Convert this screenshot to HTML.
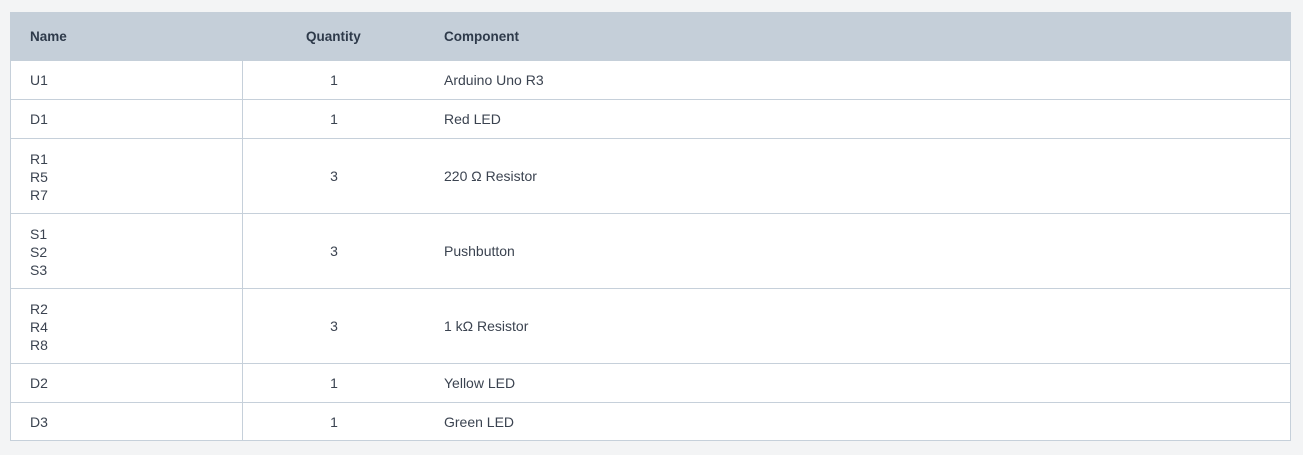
<!DOCTYPE html>
<html><head><meta charset="utf-8"><style>
html,body{margin:0;padding:0;background:#f3f4f5;width:1303px;height:455px;overflow:hidden;font-family:"Liberation Sans",Arial,sans-serif;}
.t{position:absolute;left:10px;top:12px;width:1279px;height:428px;border:1px solid #c6d0da;border-top:none;background:#fff;}
.h{position:absolute;left:10px;top:12px;width:1281px;height:49px;background:#c5cfd9;}
.x{position:absolute;font-size:14px;color:#3b4350;white-space:nowrap;}
.b{font-weight:bold;color:#2e3a4a;font-size:13.5px;}
.hl{position:absolute;left:10px;width:1281px;height:1px;background:#c6d0da;}
.vl{position:absolute;left:242px;top:61px;width:1px;height:380px;background:#c6d0da;}
.q{width:40px;text-align:center;left:314px;}
</style></head><body>
<div class="t"></div>
<div class="h"></div>
<div class="vl"></div>
<div class="hl" style="top:99px"></div>
<div class="hl" style="top:138px"></div>
<div class="hl" style="top:213px"></div>
<div class="hl" style="top:288px"></div>
<div class="hl" style="top:363px"></div>
<div class="hl" style="top:402px"></div>

<div class="x b" style="left:30px;top:29px">Name</div>
<div class="x b" style="left:306px;top:29px">Quantity</div>
<div class="x b" style="left:444px;top:29px">Component</div>

<div class="x" style="left:30px;top:72px">U1</div>
<div class="x q" style="top:72px">1</div>
<div class="x" style="left:444px;top:72px">Arduino Uno R3</div>

<div class="x" style="left:30px;top:111px">D1</div>
<div class="x q" style="top:111px">1</div>
<div class="x" style="left:444px;top:111px">Red LED</div>

<div class="x" style="left:30px;top:150px;line-height:18px">R1<br>R5<br>R7</div>
<div class="x q" style="top:168px">3</div>
<div class="x" style="left:444px;top:168px">220 Ω Resistor</div>

<div class="x" style="left:30px;top:225px;line-height:18px">S1<br>S2<br>S3</div>
<div class="x q" style="top:243px">3</div>
<div class="x" style="left:444px;top:243px">Pushbutton</div>

<div class="x" style="left:30px;top:300px;line-height:18px">R2<br>R4<br>R8</div>
<div class="x q" style="top:318px">3</div>
<div class="x" style="left:444px;top:318px">1 kΩ Resistor</div>

<div class="x" style="left:30px;top:375px">D2</div>
<div class="x q" style="top:375px">1</div>
<div class="x" style="left:444px;top:375px">Yellow LED</div>

<div class="x" style="left:30px;top:414px">D3</div>
<div class="x q" style="top:414px">1</div>
<div class="x" style="left:444px;top:414px">Green LED</div>
</body></html>
